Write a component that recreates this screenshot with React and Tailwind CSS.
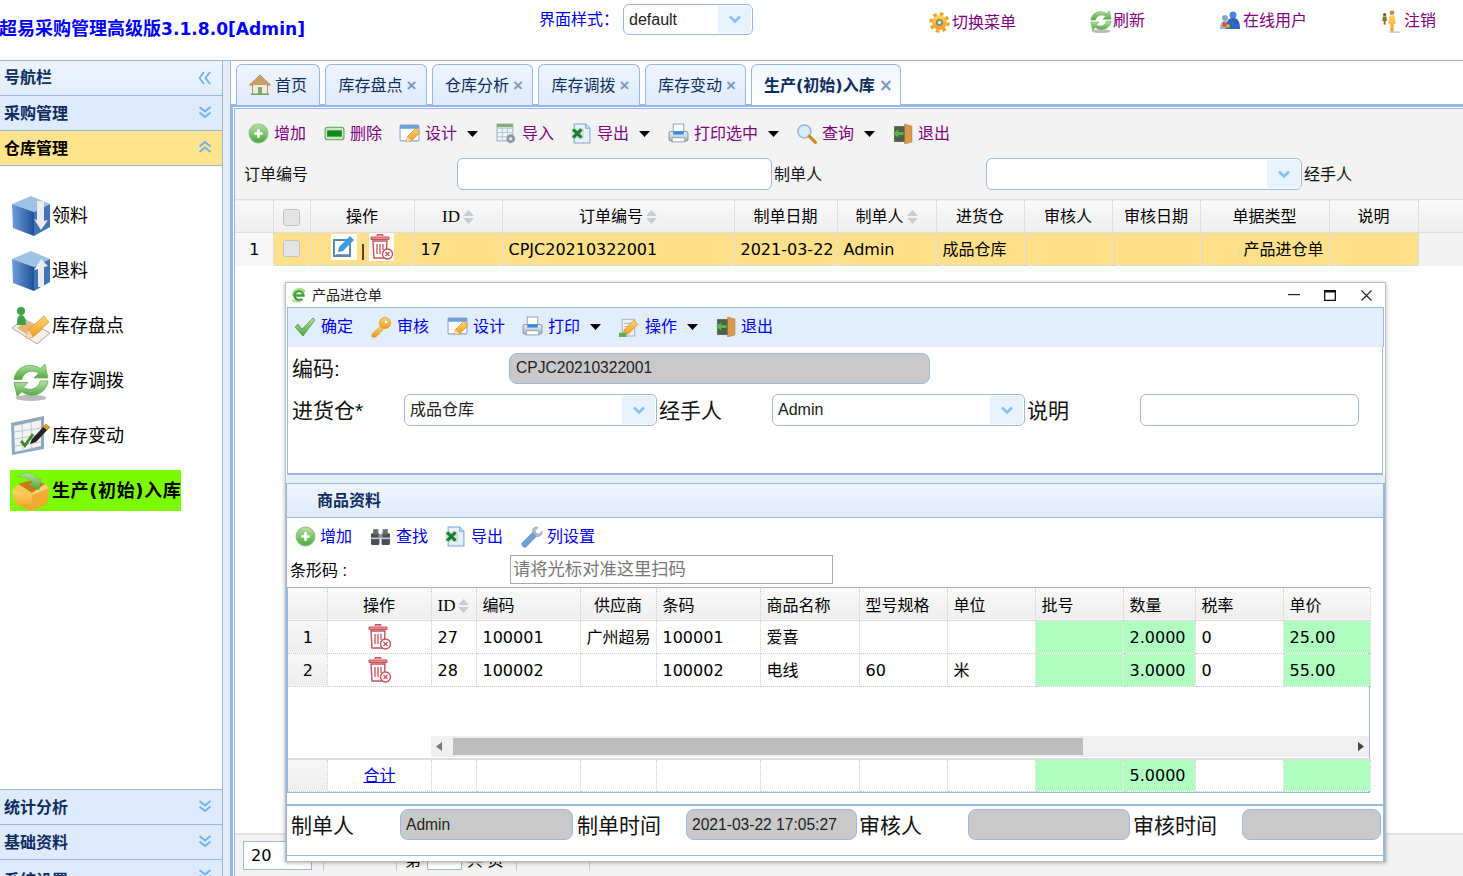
import React from "react";

const Defs = () => (
  <svg className="absolute h-0 w-0" aria-hidden="true">
    <defs>
      <linearGradient id="gGreen" x1="0" y1="0" x2="0" y2="1"><stop offset="0" stopColor="#b5e3a3" /><stop offset="1" stopColor="#4da53c" /></linearGradient>
      <linearGradient id="gBlue" x1="0" y1="0" x2="1" y2="0"><stop offset="0" stopColor="#6f9fd8" /><stop offset="1" stopColor="#1f4f99" /></linearGradient>
      <linearGradient id="gOrange" x1="0" y1="0" x2="0" y2="1"><stop offset="0" stopColor="#ffd76b" /><stop offset="1" stopColor="#ee9a1e" /></linearGradient>
      <linearGradient id="gGray" x1="0" y1="0" x2="0" y2="1"><stop offset="0" stopColor="#f4f6f8" /><stop offset="1" stopColor="#aab4bf" /></linearGradient>
    </defs>
  </svg>
);

const S = ({ s = 21, v = 20, children }) => (
  <svg width={s} height={s} viewBox={`0 0 ${v} ${v}`} className="shrink-0">{children}</svg>
);

const PlusI = () => <S><circle cx="10" cy="10" r="9" fill="url(#gGreen)" stroke="#8fc586" /><path d="M10 6v8M6 10h8" stroke="#fff" strokeWidth="2.6" /></S>;
const DelI = () => <S><rect x="1" y="4" width="18" height="12" rx="2.5" fill="#cfe6c9" stroke="#5fa257" /><rect x="3" y="7" width="14" height="6" fill="#0c8a12" /></S>;
const Pencil = () => <><path d="M7 18l1-5 8-8 4 4-8 8z" fill="url(#gOrange)" stroke="#b97a1a" strokeWidth=".6" /><path d="M7 18l1-5 4 4z" fill="#f5dcb0" /></>;
const DesignI = () => <S><rect x="1" y="2" width="18" height="15" rx="1" fill="#fff" stroke="#86a6cc" /><rect x="1" y="2" width="18" height="3.5" fill="#6f9fd8" /><Pencil /></S>;
const ImportI = () => <S><rect x="1" y="1" width="15" height="16" fill="#eef3f8" stroke="#9cb0c4" /><path d="M1 5h15M1 9h15M1 13h15M6 5v12M11 5v12" stroke="#b7c8d9" /><rect x="1" y="1" width="15" height="3" fill="#7fb06e" /><circle cx="14" cy="15" r="4.2" fill="#8b97a3" /><circle cx="14" cy="15" r="1.5" fill="#eee" /></S>;
const ExcelI = () => <S><path d="M3 1h11l4 4v14H3z" fill="#e8f0fb" stroke="#7ba6d6" /><path d="M14 1v4h4" fill="#cfe0f5" stroke="#7ba6d6" /><rect x="0.5" y="5" width="12" height="10" fill="#cfe3cf" /><path d="M2 6l8 8M10 6l-8 8" stroke="#1b7d3a" strokeWidth="3" /></S>;
const PrinterI = () => <S><rect x="5" y="1" width="10" height="8" fill="#fff" stroke="#9aa8b5" /><rect x="1" y="8" width="18" height="9" rx="2" fill="url(#gGray)" stroke="#8c99a6" /><rect x="5" y="8" width="10" height="3" fill="#2f8ce6" /><rect x="4" y="14" width="12" height="4" fill="#fff" stroke="#9aa8b5" /></S>;
const SearchI = () => <S><circle cx="8" cy="8" r="6.2" fill="#d7ecfb" stroke="#9cb4c8" strokeWidth="1.4" /><path d="M12.5 12.5l6 6" stroke="#d08a23" strokeWidth="3" strokeLinecap="round" /></S>;
const DoorI = () => <S><rect x="2" y="3" width="13" height="15" fill="#4e5f4b" /><path d="M12 1l7 2v15l-7 2z" fill="#d99a4e" stroke="#a8702f" strokeWidth=".5" /><path d="M1 10l5-4v2.5h5v3H6V14z" fill="#56b848" /></S>;
const Caret = () => <svg width="11" height="6" viewBox="0 0 11 6" className="shrink-0"><path d="M0 0h11L5.5 6z" fill="#000" /></svg>;
const ChevD = () => <svg width="14" height="9" viewBox="0 0 14 9"><path d="M2 1.5l5 5 5-5" fill="none" stroke="#7fc2f5" strokeWidth="2.6" /></svg>;
const Dbl = ({ dir = "down" }) => {
  const p = { down: "M1.5 1l5.5 4.5L12.5 1M1.5 6.5L7 11l5.500-4.500", up: "M1.500 11L7 6.500 12.500 11M1.500 5.500L7 1l5.500 4.500", left: "M6 1L1.500 7 6 13M12 1L7.500 7l4.500 6" }[dir];
  return <svg width="14" height="14" viewBox="0 0 14 14" className="shrink-0"><path d={p} fill="none" stroke="#6cb2ee" strokeWidth="1.800" /></svg>;
};
const GearI = () => <S><circle cx="10" cy="10" r="7" fill="url(#gOrange)" /><circle cx="10" cy="10" r="8.200" fill="none" stroke="#f0a21f" strokeWidth="3" strokeDasharray="3.400 3.050" /><circle cx="10" cy="10" r="3.400" fill="#8a8a6a" /><circle cx="10" cy="10" r="1.600" fill="#eee" /></S>;
const RefreshPaths = () => <>
  <ellipse cx="13" cy="24" rx="10" ry="2" fill="#bbb" />
  <path d="M2 12C3 4 12 0 19 5l3-3 2 9-9 0 3-3c-4-3-10-1-11 4z" fill="url(#gGreen)" stroke="#6bb35a" strokeWidth=".6" />
  <path d="M24 13c-1 8-10 12-17 7l-3 3-2-9 9 0-3 3c4 3 10 1 11-4z" fill="url(#gGreen)" stroke="#6bb35a" strokeWidth=".6" />
</>;
const RefreshSm = () => <S s={24} v={26}><RefreshPaths /></S>;
const UsersI = () => <S s={24} v={24}><circle cx="7" cy="9" r="3" fill="#8aa7c9" /><path d="M2 20c0-6 2-8 5-8s5 2 5 8z" fill="#9db6d4" /><circle cx="15" cy="6" r="3.500" fill="#4a86d8" /><path d="M8 20c0-9 3-11 7-11s7 2 7 11z" fill="#2e68bd" /><path d="M5 13l4 1-1 4-4-1z" fill="#e44d26" /><path d="M9 15l3 1-1 3-3-1z" fill="#f7b500" /></S>;
const PersonI = () => <S s={24} v={26}><circle cx="13" cy="4" r="2.500" fill="#c28a3b" /><path d="M10 7h6l1 9h-2l-.5 9h-3L11 16H9z" fill="url(#gOrange)" /><circle cx="5" cy="6" r="1.800" fill="#7a5b2d" /><path d="M3 8h4l.5 5H6v4H4v-4H2.500z" fill="#8f6c33" /><ellipse cx="16" cy="25" rx="7" ry="1" fill="#ccc" /></S>;
const HomeI = () => <S s={22} v={22}><path d="M11 1L0.500 11h3v9h15v-9h3z" fill="#c9a06a" stroke="#9a6f3a" strokeWidth=".6" /><rect x="4" y="11" width="14" height="9" fill="#f3ead8" /><rect x="9" y="13" width="4" height="7" fill="#7fa86d" /><rect x="2" y="19.500" width="18" height="1.500" fill="#6fa35f" /></S>;
const Cube = ({ up }) => (
  <svg width="40" height="42" viewBox="0 0 40 42" className="shrink-0">
    <path d="M1 9L20 1l19 8-16 8z" fill="#9dc3e6" />
    <path d="M1 9l22 8v24L2 33z" fill="url(#gBlue)" />
    <path d="M23 17l16-8v23l-16 9z" fill="#3f74b8" />
    <path d={up ? "M23 20l7-11 7 7-4 1v20h-6V19z" : "M26 6h7v20l4-1-7 10-7-11 3 1z"} fill="#ececec" />
  </svg>
);
const ClipBig = () => <svg width="40" height="40" viewBox="0 0 40 40" className="shrink-0"><path d="M1 22l12-9 26 14-13 11z" fill="#f3f1e6" stroke="#aaa" /><path d="M6 22l9-7 16 9-10 8z" fill="#e9b574" /><circle cx="10" cy="5" r="4" fill="#3ea348" /><path d="M6 19c0-7 1-10 4-10s5 3 5 10z" fill="#3ea348" /><path d="M15 33l2-9 16-14 5 6-16 15z" fill="url(#gOrange)" stroke="#c98a1c" strokeWidth=".6" /><path d="M15 33l2-9 5 7z" fill="#f4dcb6" /></svg>;
const RefreshBig = () => <svg width="40" height="40" viewBox="0 0 26 26" className="shrink-0"><RefreshPaths /></svg>;
const ChartBig = () => <svg width="42" height="42" viewBox="0 0 42 42" className="shrink-0"><path d="M1 8l33-7v33L2 40z" fill="#8fa8bd" /><path d="M4 11l27-6v26L5 37z" fill="#f2f4f4" /><path d="M4 17l27-4M4 24l27-4M5 31l26-4M12 9l1 27M21 7l1 27" stroke="#c0c8cf" /><path d="M10 27l5 6 9-13-2-2-7 10-3-3z" fill="#3d8a2b" /><path d="M22 24l14-15 4 3-14 15-6 2z" fill="#222" /><path d="M33 12l3-3 4 3-3 3z" fill="#d9a321" /></svg>;
const BoxBig = () => (
  <svg width="42" height="40" viewBox="0 0 42 40" className="shrink-0">
    <path d="M8 13l14-4 13 4-13 9z" fill="#c9791a" />
    <path d="M2 19l20 5v16L5 33z" fill="url(#gOrange)" />
    <path d="M22 24l17-7-2 16-15 7z" fill="#f4ab35" />
    <path d="M2 19l6-6 14 9v2z" fill="#f9c65c" />
    <path d="M39 17l-4-4-13 9v2z" fill="#fbd27a" />
    <path d="M7 6c7-6 17-5 20 2l4-1-2 12-10-6 4-1C19 7 13 5 7 6z" fill="url(#gGreen)" stroke="#6cae5a" strokeWidth=".5" />
  </svg>
);
const CheckI = () => <S s={22} v={22}><path d="M1 11l3-3 4 5L19 2l2 2L9 20z" fill="url(#gGreen)" stroke="#3e9a37" strokeWidth=".7" /></S>;
const KeyI = () => <S s={22} v={22}><circle cx="15" cy="7" r="5.500" fill="url(#gOrange)" stroke="#d7921f" strokeWidth=".7" /><circle cx="16" cy="6" r="1.300" fill="#fff" /><path d="M11 10L2 18v3h4l1-2 2-.5.500-2.500 2-.5 1.500-2.500z" fill="url(#gOrange)" stroke="#d7921f" strokeWidth=".7" /></S>;
const OpI = () => <S><path d="M3 3h12v16H3z" fill="#eef1f6" stroke="#a7b0bd" /><path d="M5 7h8M5 10h6" stroke="#b7bdc8" /><path d="M4 18l1-5 9-9 4 4-9 9z" fill="url(#gOrange)" stroke="#b97a1a" strokeWidth=".5" /><rect x="0" y="16" width="7" height="4" fill="#5fae4c" /></S>;
const BinocI = () => <S><rect x="1" y="7" width="8" height="11" rx="1" fill="#4a4f57" /><rect x="11" y="7" width="8" height="11" rx="1" fill="#4a4f57" /><rect x="3" y="3" width="5" height="5" fill="#6b7078" /><rect x="12" y="3" width="5" height="5" fill="#6b7078" /><rect x="8" y="8" width="4" height="4" fill="#8a8f96" /><rect x="1" y="11" width="18" height="1.500" fill="#c5c9cf" /></S>;
const WrenchI = () => <S s={22} v={22}><path d="M1 17L12 6c-1-3 1-5 4-5l1 .5-3 3 1 3 3 .8 3-3c.5 3-2 6-5.500 5L5 21c-2 1.500-5-2-4-4z" fill="#6f9fd8" stroke="#4f79ae" strokeWidth=".5" /><path d="M12 6c-1-3 1-5 4-5l1 .5-3 3 1 3 3 .8 3-3c.5 3-2 6-5.500 5z" fill="#b7bcc3" /></S>;
const EI = () => <S s={16} v={16}><path d="M2 9a6.500 6.500 0 0 1 12-4" fill="none" stroke="#a6dc8a" strokeWidth="2" /><path d="M4 8.500h8.500a4.500 4.500 0 1 0-1.300 3.300" fill="none" stroke="#3fa535" strokeWidth="2.400" /><path d="M1 13c3 2 6 2 9 1" fill="none" stroke="#a6dc8a" strokeWidth="1.600" /></S>;
const TrashI = () => (
  <svg width="25" height="28" viewBox="0 0 25 28" className="shrink-0">
    <rect width="25" height="28" fill="#fff" opacity=".9" />
    <path d="M8 3V1.500h6V3M2 4h18v2.500H2z" fill="#e98f96" stroke="#c5525c" strokeWidth="1" />
    <path d="M4 8h14l-1 17H5z" fill="#fff" stroke="#c5525c" strokeWidth="1.400" />
    <path d="M8 11v10M11 11v10M14 11v6" stroke="#c5525c" strokeWidth="1.300" />
    <circle cx="18.500" cy="21" r="5" fill="#fff" stroke="#c5525c" strokeWidth="1.400" />
    <path d="M16.500 19l4 4M20.500 19l-4 4" stroke="#c5525c" strokeWidth="1.300" />
  </svg>
);
const EditI = () => (
  <svg width="26" height="26" viewBox="0 0 26 26" className="shrink-0">
    <rect width="26" height="26" fill="#fff" />
    <path d="M19 8v14H3V6h13" fill="#fff" stroke="#5d8aa8" strokeWidth="2" />
    <path d="M7 18l1-5L19 2l4 4-11 11z" fill="#3f9be0" />
    <path d="M5 21h13" stroke="#5d8aa8" strokeWidth="1.500" />
  </svg>
);
const SortI = () => (
  <svg width="11" height="14" viewBox="0 0 11 14" className="shrink-0"><path d="M5.500 0L11 6H0zM0 8h11l-5.500 6z" fill="#c9cdd1" /></svg>
);
const Check = () => <span className="inline-block h-[17px] w-[17px] rounded-[3px] border border-[#c2c2c2] bg-[#e4e4e4] shadow-[inset_0_0_1px_#fff]" />;

const Tool = ({ icon, text, caret, cls = "", color = "text-[#800080]", gap = "gap-[5px]" }) => (
  <div className={`flex shrink-0 items-center ${gap} ${cls}`}>
    {icon}
    <span className={`text-[16px] leading-none ${color}`}>{text}</span>
    {caret && <span className="ml-[5px] flex"><Caret /></span>}
  </div>
);

const Select = ({ value, cls }) => (
  <div className={`flex items-center rounded-[6px] border border-[#95b8e7] bg-white pl-[5px] ${cls}`}>
    <span className="flex-1 text-[16px] leading-none text-[#222]">{value}</span>
    <span className="mr-[1px] flex h-[calc(100%-2px)] w-[33px] items-center justify-center bg-[#e9f1fc]"><ChevD /></span>
  </div>
);

const navCls = "flex h-[35px] shrink-0 items-center justify-between border-b border-[#95b8e7] bg-[#dfeafd] pl-[4px] pr-[10px] text-[16px] font-bold text-[#0e2d5f]";

const Side = () => {
  const items = [
    [<Cube />, "领料"],
    [<Cube up />, "退料"],
    [<ClipBig />, "库存盘点"],
    [<RefreshBig />, "库存调拨"],
    [<ChartBig />, "库存变动"],
  ];
  return (
    <aside className="flex h-full w-[223px] shrink-0 flex-col border-r border-[#95b8e7] bg-white">
      <div className={`${navCls} bg-gradient-to-b from-[#eff5ff] to-[#e0ecff]`}><span>号航栏</span><Dbl dir="left" /></div>
      <div className={navCls}><span className="pt-[2px]">采购管理</span><Dbl /></div>
      <div className={`${navCls} bg-[#ffe48d] text-black`}><span className="pt-[2px]">仓库管理</span><Dbl dir="up" /></div>
      <div className="flex flex-1 flex-col gap-[14px] pl-[10px] pt-[29px]">
        {items.map(([ic, t]) => (
          <div key={t} className="flex h-[41px] items-center text-[18px] text-black">
            <span className="flex w-[42px] justify-center">{ic}</span><span className="pt-[2px]">{t}</span>
          </div>
        ))}
        <div className="flex h-[41px] w-[171px] items-center bg-[#7cfc00] text-[18px] font-bold text-black">
          <span className="flex w-[42px] justify-center"><BoxBig /></span>
          <span className="whitespace-nowrap font-['DejaVu_Sans','Noto_Sans_CJK_SC',sans-serif] tracking-[0.6px]">生产(初始)入库</span>
        </div>
      </div>
      <div className={`${navCls} !h-[36px] border-t`}><span className="pt-[2px]">统计分析</span><Dbl /></div>
      <div className={navCls}><span className="pt-[2px]">基础资料</span><Dbl /></div>
      <div className={`${navCls} !h-[16px] !items-start overflow-hidden border-b-0 pt-[9px]`}><span className="whitespace-nowrap">系统设置</span><Dbl /></div>
    </aside>
  );
};

const Tab = ({ w, text, home, active }) => (
  <div className={`relative flex h-[41px] shrink-0 items-center justify-center gap-[4px] rounded-t-[6px] border border-[#95b8e7] text-[16px] text-[#0e2d5f] ${w} ${home ? "" : "pl-[3px]"} ${active ? "z-10 -mb-[1px] border-b-0 !pl-[5px] bg-gradient-to-b from-[#f0f5ff] to-white font-['DejaVu_Sans','Noto_Sans_CJK_SC',sans-serif] font-bold" : "border-b-0 bg-gradient-to-b from-[#eff5ff] to-[#dfeafd]"}`}>
    {home && <HomeI />}
    <span className="pt-[1px]">{text}</span>
    {!home && <span className="text-[17px] font-bold leading-none text-[#7d98c4]">×</span>}
  </div>
);

const thCls = "border-r border-dotted border-[#ccc] p-0 pt-[2px] text-center text-[16px] font-normal text-black";
const tdCls = "border-r border-b border-dotted border-[#ccc] pl-[6px] pr-[5px] py-0 pt-[2px] text-[16px] text-black whitespace-nowrap overflow-hidden";
const heads = ["操作", "ID", "订单编号", "制单日期", "制单人", "进货仓", "审核人", "审核日期", "单据类型", "说明"];

const MainTable = () => (
  <div className="flex items-start font-['DejaVu_Sans','Noto_Sans_CJK_SC',sans-serif]">
    <table className="w-[1183px] shrink-0 table-fixed border-collapse">
      <colgroup>
        <col className="w-[38px]" /><col className="w-[37px]" /><col className="w-[104px]" /><col className="w-[88px]" /><col className="w-[232px]" /><col className="w-[103px]" /><col className="w-[99px]" /><col className="w-[88px]" /><col className="w-[88px]" /><col className="w-[88px]" /><col className="w-[129px]" /><col className="w-[89px]" />
      </colgroup>
      <thead>
        <tr className="h-[33px] border-y border-[#ddd] bg-gradient-to-b from-[#f9f9f9] to-[#efefef]">
          <th className={thCls} />
          <th className={thCls}><span className="flex justify-center"><Check /></span></th>
          {heads.map((h) => (
            <th key={h} className={thCls}>
              <span className="flex items-center justify-center gap-[3px]">
                <span className={h === "ID" ? "font-['Liberation_Serif','Noto_Sans_CJK_SC',serif] text-[17px]" : ""}>{h}</span>
                {(h === "ID" || h === "订单编号" || h === "制单人") && <SortI />}
              </span>
            </th>
          ))}
        </tr>
      </thead>
      <tbody>
        <tr className="h-[33px] bg-[#ffe08a]">
          <td className={`${tdCls} border-b-0 bg-[#f7f7f7] text-center`}>1</td>
          <td className={tdCls}><span className="-ml-[1px] -mt-[4px] flex justify-center"><Check /></span></td>
          <td className={`${tdCls} !pt-0`}>
            <span className="-mt-[5px] flex h-[28px] items-center justify-center gap-[3px]"><EditI /><span className="mt-[8px] leading-none">|</span><TrashI /></span>
          </td>
          <td className={tdCls}>17</td>
          <td className={tdCls}>CPJC20210322001</td>
          <td className={tdCls}>2021-03-22</td>
          <td className={tdCls}>Admin</td>
          <td className={tdCls}>成品仓库</td>
          <td className={tdCls} />
          <td className={tdCls} />
          <td className={`${tdCls} text-right`}>产品进仓单</td>
          <td className={tdCls} />
        </tr>
      </tbody>
    </table>
    <div className="h-[34px] flex-1 border-y border-[#ddd] bg-gradient-to-b from-[#f9f9f9] to-[#efefef]" />
  </div>
);

const dH = ["操作", "ID", "编码", "供应商", "条码", "商品名称", "型号规格", "单位", "批号", "数量", "税率", "单价"];
const dAlign = ["text-center", "text-left", "text-left", "text-center", "text-left", "text-left", "text-left", "text-left", "text-left", "text-left", "text-left", "text-left"];
const green = "bg-[#b0ffc0]";
const DCols = () => (
  <colgroup>
    <col className="w-[39px]" /><col className="w-[104px]" /><col className="w-[45px]" /><col className="w-[104px]" /><col className="w-[76px]" /><col className="w-[104px]" /><col className="w-[99px]" /><col className="w-[88px]" /><col className="w-[88px]" /><col className="w-[88px]" /><col className="w-[72px]" /><col className="w-[88px]" /><col className="w-[87px]" />
  </colgroup>
);
const dRows = [
  ["1", "27", "100001", "广州超易", "100001", "爱喜", "", "", "", "2.0000", "0", "25.00"],
  ["2", "28", "100002", "", "100002", "电线", "60", "米", "", "3.0000", "0", "55.00"],
];
const DetailGrid = () => (
  <div className="mt-[3px] h-[206px] w-[1083px] border border-[#95b8e7] font-['DejaVu_Sans','Noto_Sans_CJK_SC',sans-serif]">
    <table className="w-[1082px] table-fixed border-collapse">
      <DCols />
      <thead>
        <tr className="h-[32px] border-b border-[#ddd] bg-gradient-to-b from-[#f9f9f9] to-[#efefef]">
          <th className={`${thCls} !pt-[4px]`} />
          {dH.map((h, i) => (
            <th key={h} className={`${thCls} !pt-[4px] ${dAlign[i]} ${i > 0 && i !== 3 ? "pl-[6px]" : ""}`}>
              <span className={h === "ID" ? "inline-flex items-center gap-[3px] font-['Liberation_Serif',serif] text-[17px]" : ""}>{h}{h === "ID" && <SortI />}</span>
            </th>
          ))}
        </tr>
      </thead>
      <tbody>
        {dRows.map((r) => (
          <tr key={r[0]} className="h-[33px]">
            <td className={`${tdCls} bg-gradient-to-b from-[#f7f7f7] to-[#eee] text-center`}>{r[0]}</td>
            <td className={`${tdCls} !pt-0`}><span className="flex justify-center"><TrashI /></span></td>
            {r.slice(1).map((c, i) => {
              const g = i === 7 || i === 8 || i === 10;
              return <td key={i} className={`${tdCls} ${g ? green : ""}`}>{c}</td>;
            })}
          </tr>
        ))}
      </tbody>
    </table>
    <div className="h-[49px]" />
    <div className="ml-[143px] flex h-[21px] items-center justify-between bg-[#f0f0f0] px-[5px]">
      <svg width="6" height="9" viewBox="0 0 6 9"><path d="M6 0v9L0 4.500z" fill="#777" /></svg>
      <div className="ml-[11px] mr-auto h-[17px] w-[630px] bg-[#bdbdbd]" />
      <svg width="6" height="9" viewBox="0 0 6 9"><path d="M0 0v9l6-4.500z" fill="#444" /></svg>
    </div>
    <table className="mt-[1px] w-[1082px] table-fixed border-collapse border-t-2 border-[#ddd]">
      <DCols />
      <tbody>
        <tr className="h-[33px]">
          <td className={`${tdCls} bg-gradient-to-b from-[#f7f7f7] to-[#eee]`} />
          <td className={`${tdCls} text-center !text-[#0000ee] underline`}>合计</td>
          {["", "", "", "", "", "", "", "", "5.0000", "", ""].map((c, i) => (
            <td key={i} className={`${tdCls} ${i === 7 || i === 8 || i === 10 ? green : ""}`}>{c}</td>
          ))}
        </tr>
      </tbody>
    </table>
  </div>
);

const GrayInput = ({ value, cls }) => (
  <div className={`flex shrink-0 items-center rounded-[8px] border border-[#95b8e7] bg-[#c9c9c9] pl-[5px] text-[15.600px] leading-none text-[#222] ${cls}`}>{value}</div>
);

const Dialog = () => (
  <div className="absolute left-[285px] top-[282px] flex h-[580px] w-[1101px] flex-col border border-[#bcbcbc] bg-white shadow-[0_1px_4px_rgba(0,0,0,0.3)]">
    <div className="flex h-[24px] shrink-0 items-center bg-white pl-[5px]">
      <EI />
      <span className="ml-[5px] text-[14px] text-[#222]">产品进仓单</span>
      <div className="ml-auto flex items-center">
        <svg width="12" height="2" viewBox="0 0 12 2" className="mr-[24px]"><rect width="12" height="1.200" fill="#222" /></svg>
        <svg width="12" height="11" viewBox="0 0 12 11" className="mr-[25px]"><path d="M.7.700h10.600v9.600H.7z" fill="none" stroke="#111" strokeWidth="1.300" /><path d="M0 1.500h12" stroke="#111" strokeWidth="2" /></svg>
        <svg width="11" height="11" viewBox="0 0 11 11" className="mr-[13px]"><path d="M.5.500l10 10M10.500.500l-10 10" stroke="#222" strokeWidth="1.100" /></svg>
      </div>
    </div>
    <div className="ml-[1px] mr-[1px] flex h-[40px] shrink-0 items-center border-x border-t border-[#95b8e7] bg-[#e2edfd] pb-[2px] pl-[6px]">
      <Tool icon={<CheckI />} text="确定" color="text-[#0000ee]" />
      <Tool icon={<KeyI />} text="审核" color="text-[#0000ee]" cls="ml-[17px]" />
      <Tool icon={<DesignI />} text="设计" color="text-[#0000ee]" cls="ml-[18px]" />
      <Tool icon={<PrinterI />} text="打印" caret color="text-[#0000ee]" cls="ml-[17px]" />
      <Tool icon={<OpI />} text="操作" caret color="text-[#0000ee]" cls="ml-[18px]" />
      <Tool icon={<DoorI />} text="退出" color="text-[#0000ee]" cls="ml-[17px]" />
    </div>
    <div className="ml-[1px] mr-[2px] h-[128px] shrink-0 border-x border-b-2 border-[#95b8e7] bg-white pl-[4px] pt-[6px]">
      <div className="flex h-[31px] items-center text-[21px] text-[#111]">
        <span className="w-[217px]">编码:</span>
        <GrayInput value="CPJC20210322001" cls="h-[31px] w-[421px] !pl-[6px] !pb-[2px]" />
      </div>
      <div className="mt-[10px] flex h-[32px] items-center text-[21px] text-[#111]">
        <span className="w-[112px] pt-[2px]">进货仓*</span>
        <Select value="成品仓库" cls="h-[32px] w-[253px] !pl-[5px]" />
        <span className="ml-[2px] w-[113px] pt-[2px]">经手人</span>
        <Select value="Admin" cls="h-[32px] w-[253px]" />
        <span className="ml-[2px] w-[113px] pt-[2px]">说明</span>
        <div className="h-[32px] w-[219px] rounded-[6px] border border-[#95b8e7]" />
      </div>
    </div>
    <div className="h-[8px] shrink-0 bg-[#e6eef8]" />
    <div className="flex flex-1 flex-col border-r-2 border-l border-[#95b8e7]">
      <div className="flex h-[35px] shrink-0 items-center border-y border-[#95b8e7] bg-gradient-to-b from-[#f0f5fe] to-[#e0ebfd] pl-[30px] text-[16px] font-bold text-[#0e2d5f]">商品资料</div>
      <div className="flex h-[36px] shrink-0 items-center pl-[8px] pt-[1px]">
        <Tool icon={<PlusI />} text="增加" color="text-[#0000ee]" gap="gap-[4px]" />
        <Tool icon={<BinocI />} text="查找" color="text-[#0000ee]" cls="ml-[18px]" />
        <Tool icon={<ExcelI />} text="导出" color="text-[#0000ee]" cls="ml-[17px]" />
        <Tool icon={<WrenchI />} text="列设置" color="text-[#0000ee]" gap="gap-[4px]" cls="ml-[18px]" />
      </div>
      <div className="flex h-[30px] shrink-0 items-center pl-[3px] pt-[1px]">
        <span className="w-[220px] pt-[2px] text-[16px] text-black">条形码 :</span>
        <input readOnly placeholder="请将光标对准这里扫码" className="h-[29px] w-[323px] border border-[#a9a9a9] pl-[2px] text-[17.300px] text-[#777] outline-none placeholder:text-[#777]" />
      </div>
      <DetailGrid />
      <div className="mt-[11px] flex h-[52px] shrink-0 items-start gap-0 border-y-[2px] border-b-[1px] border-[#95b8e7] pl-[4px] pt-[3px] text-[21px] text-[#111]">
        <span className="w-[109px] leading-[33px]">制单人</span>
        <GrayInput value="Admin" cls="h-[31px] w-[173px]" />
        <span className="ml-[4px] w-[109px] leading-[33px]">制单时间</span>
        <GrayInput value="2021-03-22 17:05:27" cls="h-[31px] w-[171px]" />
        <span className="ml-[2px] w-[109px] leading-[33px]">审核人</span>
        <GrayInput value="" cls="h-[31px] w-[162px]" />
        <span className="ml-[3px] w-[109px] leading-[33px]">审核时间</span>
        <GrayInput value="" cls="h-[31px] w-[139px]" />
      </div>
    </div>
  </div>
);

export default function App() {
  return (
    <div className="relative h-[876px] w-[1463px] overflow-hidden bg-white font-['Liberation_Sans','Noto_Sans_CJK_SC',sans-serif]">
      <Defs />
      <header className="grid h-[61px] grid-cols-[539px_390px_160px_129px_162px_1fr] items-start border-b border-[#95b8e7]">
        <h1 className="-ml-[1px] mt-[17px] whitespace-nowrap text-[18px] font-bold leading-[24px] text-[#0000ff]">
          超易采购管理高级版<span className="font-['DejaVu_Sans',sans-serif] text-[17.100px]">3.1.8.0[Admin]</span>
        </h1>
        <div className="mt-[4px] flex items-center">
          <span className="w-[84px] text-[16px] text-[#0000ee]">界面样式：</span>
          <Select value="default" cls="h-[31px] w-[130px]" />
        </div>
        <Tool icon={<GearI />} text="切换菜单" gap="gap-[2px]" cls="mt-[12px]" />
        <Tool icon={<RefreshSm />} text="刷新" gap="gap-0" cls="mt-[9px]" />
        <Tool icon={<UsersI />} text="在线用户" gap="gap-[1px]" cls="mt-[9px]" />
        <Tool icon={<PersonI />} text="注销" gap="gap-0" cls="mt-[9px]" />
      </header>
      <div className="flex h-[815px]">
        <Side />
        <div className="w-[7px] shrink-0 bg-[#e6eef8]" />
        <main className="flex min-w-0 flex-1 flex-col">
          <div className="flex h-[46px] shrink-0 gap-[5px] border-b-[3px] border-l border-[#95b8e7] pl-[5px] pt-[3px]">
            <Tab w="w-[84px]" text="首页" home />
            <Tab w="w-[102px]" text="库存盘点" />
            <Tab w="w-[101px]" text="仓库分析" />
            <Tab w="w-[102px]" text="库存调拨" />
            <Tab w="w-[101px]" text="库存变动" />
            <Tab w="w-[150px]" text="生产(初始)入库" active />
          </div>
          <div className="flex min-h-0 flex-1 border-l-[3px] border-[#95b8e7]">
            <div className="ml-[1px] mt-[1px] flex min-w-0 flex-1 flex-col border-l border-t border-[#95b8e7] bg-[#f3f3f3]">
              <div className="flex h-[49px] shrink-0 items-center pl-[13px]">
                <Tool icon={<PlusI />} text="增加" />
                <Tool icon={<DelI />} text="删除" cls="ml-[18px]" />
                <Tool icon={<DesignI />} text="设计" caret cls="ml-[17px]" />
                <Tool icon={<ImportI />} text="导入" cls="ml-[18px]" />
                <Tool icon={<ExcelI />} text="导出" caret cls="ml-[17px]" />
                <Tool icon={<PrinterI />} text="打印选中" caret cls="ml-[18px]" />
                <Tool icon={<SearchI />} text="查询" caret cls="ml-[17px]" />
                <Tool icon={<DoorI />} text="退出" cls="ml-[17px]" />
              </div>
              <div className="flex h-[32px] shrink-0 items-center pl-[9px] text-[16px] text-[#111]">
                <span className="w-[213px] pt-[2px]">订单编号</span>
                <div className="h-[32px] w-[315px] rounded-[6px] border border-[#95b8e7] bg-white" />
                <span className="ml-[2px] w-[212px] pt-[2px]">制单人</span>
                <Select value="" cls="h-[32px] w-[316px]" />
                <span className="ml-[2px] pt-[2px]">经手人</span>
              </div>
              <div className="mt-[9px]"><MainTable /></div>
              <div className="flex-1 bg-white" />
              <div className="flex h-[43px] shrink-0 items-start border-t-2 border-[#e2e2e2] bg-[#f3f3f3] pl-[8px] pt-[6px] text-[16px]">
                <div className="flex h-[29px] w-[69px] items-center border border-[#95b8e7] bg-white pl-[7px] font-['DejaVu_Sans',sans-serif]">20</div>
                <div className="ml-[11px] h-[30px] w-[74px] border-x border-[#ccc]" />
                <span className="ml-[8px] mt-[5px] leading-[29px]">第</span>
                <div className="ml-[6px] h-[29px] w-[35px] border border-[#95b8e7] bg-white" />
                <span className="ml-[5px] mt-[5px] w-[49px] leading-[29px]">共 页</span>
                <div className="h-[30px] w-[74px] border-x border-[#ccc]" />
              </div>
            </div>
          </div>
        </main>
      </div>
      <Dialog />
    </div>
  );
}
